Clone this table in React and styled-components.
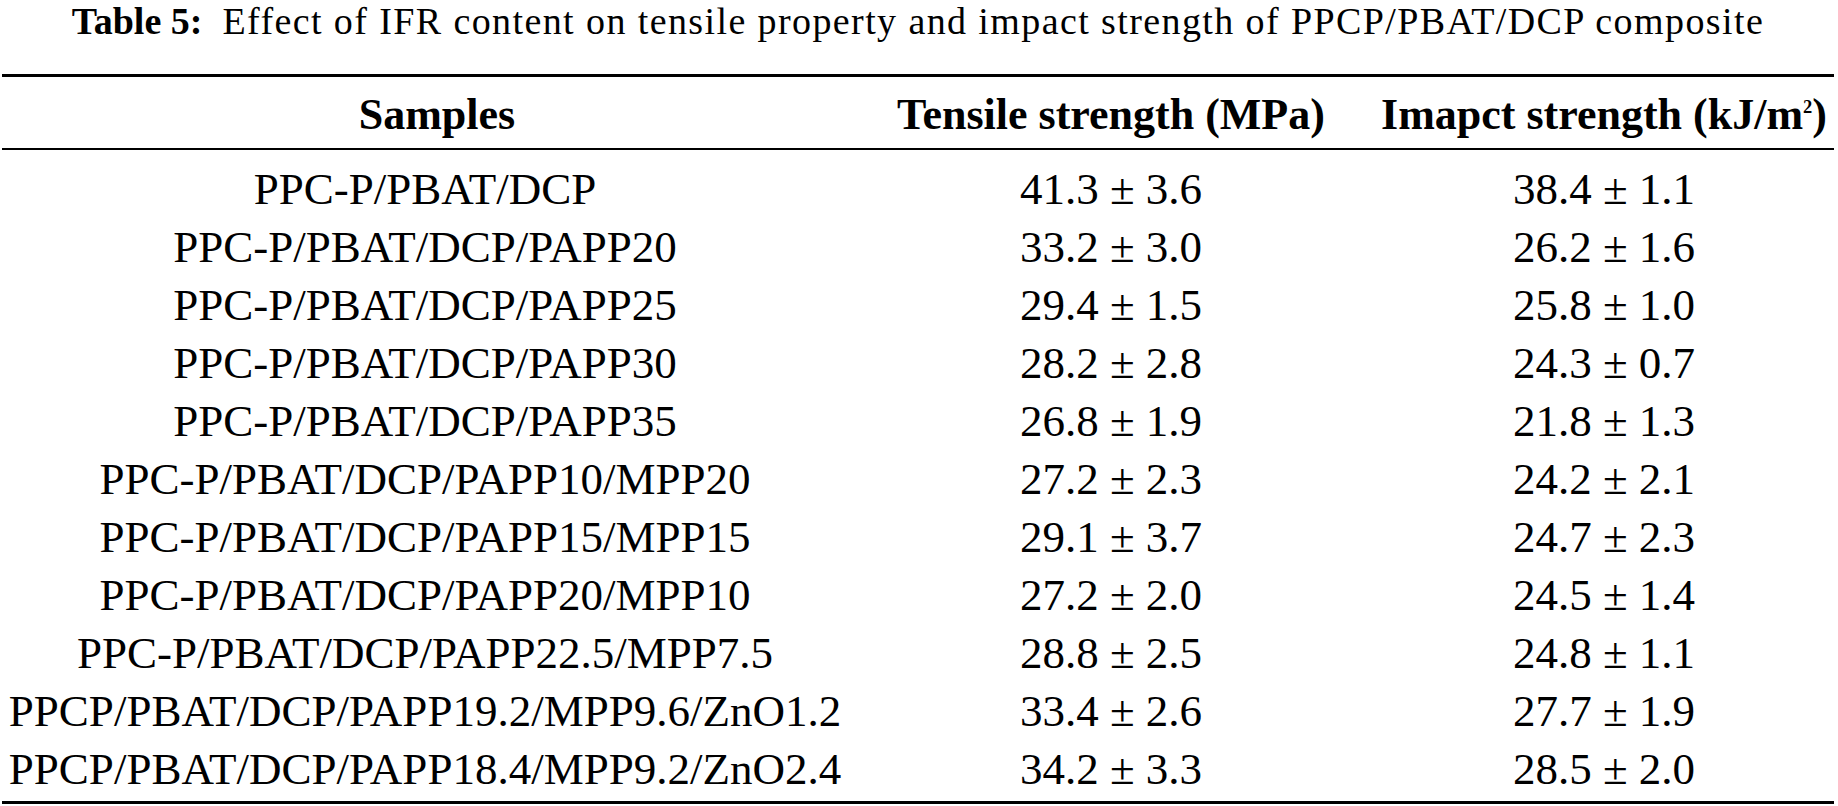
import React from "react";
import styled, { createGlobalStyle } from "styled-components";

const rows = [
  ["PPC-P/PBAT/DCP", "41.3 ± 3.6", "38.4 ± 1.1"],
  ["PPC-P/PBAT/DCP/PAPP20", "33.2 ± 3.0", "26.2 ± 1.6"],
  ["PPC-P/PBAT/DCP/PAPP25", "29.4 ± 1.5", "25.8 ± 1.0"],
  ["PPC-P/PBAT/DCP/PAPP30", "28.2 ± 2.8", "24.3 ± 0.7"],
  ["PPC-P/PBAT/DCP/PAPP35", "26.8 ± 1.9", "21.8 ± 1.3"],
  ["PPC-P/PBAT/DCP/PAPP10/MPP20", "27.2 ± 2.3", "24.2 ± 2.1"],
  ["PPC-P/PBAT/DCP/PAPP15/MPP15", "29.1 ± 3.7", "24.7 ± 2.3"],
  ["PPC-P/PBAT/DCP/PAPP20/MPP10", "27.2 ± 2.0", "24.5 ± 1.4"],
  ["PPC-P/PBAT/DCP/PAPP22.5/MPP7.5", "28.8 ± 2.5", "24.8 ± 1.1"],
  ["PPCP/PBAT/DCP/PAPP19.2/MPP9.6/ZnO1.2", "33.4 ± 2.6", "27.7 ± 1.9"],
  ["PPCP/PBAT/DCP/PAPP18.4/MPP9.2/ZnO2.4", "34.2 ± 3.3", "28.5 ± 2.0"],
];

const GlobalStyle = createGlobalStyle`
  body {
    margin: 0;
    background: #fff;
    color: #000;
    font-family: "Liberation Serif", "Times New Roman", serif;
  }
`;

function App() {
  return (
    <Page>
      <GlobalStyle />
      <Title>
        <Label>Table 5:</Label>
        <TitleText>
          Effect of IFR content on tensile property and impact strength of
          PPCP/PBAT/DCP composite
        </TitleText>
      </Title>
      <Table>
        <colgroup>
          <Col $w={846} />
          <Col $w={526} />
          <Col $w={460} />
        </colgroup>
        <thead>
          <tr>
            <HeadCell $shift={24}>Samples</HeadCell>
            <HeadCell>Tensile strength (MPa)</HeadCell>
            <HeadCell>
              Imapct strength (kJ/m<Sup>2</Sup>)
            </HeadCell>
          </tr>
        </thead>
        <Body>
          {rows.map((row) => (
            <tr key={row[0]}>
              {row.map((value, i) => (
                <Cell key={i}>{value}</Cell>
              ))}
            </tr>
          ))}
        </Body>
      </Table>
    </Page>
  );
}

export default App;

const Page = styled.div`
  width: 1838px;
  padding: 0 4px 0 2px;
  box-sizing: border-box;
`;

const Title = styled.div`
  margin: 0 0 32px;
  text-align: center;
  font-size: 38px;
  line-height: 42px;
  white-space: nowrap;
`;

const Label = styled.span`
  font-weight: bold;
  margin-right: 20px;
`;

const TitleText = styled.span`
  letter-spacing: 1.4px;
`;

const Table = styled.table`
  width: 1832px;
  table-layout: fixed;
  border-collapse: collapse;
  border-top: 3px solid #000;
  border-bottom: 3px solid #000;
`;

const Col = styled.col`
  width: ${(p) => p.$w}px;
`;

const HeadCell = styled.th`
  padding: 4px 0 0 ${(p) => p.$shift || 0}px;
  font-size: 44px;
  line-height: 67px;
  font-weight: bold;
  text-align: center;
  white-space: nowrap;
  border-bottom: 2px solid #000;
`;

const Sup = styled.sup`
  font-size: 0.42em;
  vertical-align: 0.85em;
  line-height: 0;
`;

const Body = styled.tbody`
  tr:first-child td {
    padding-top: 10px;
  }
  tr:last-child td {
    padding-bottom: 3px;
  }
`;

const Cell = styled.td`
  padding: 0;
  font-size: 45px;
  line-height: 58px;
  text-align: center;
  white-space: nowrap;
`;
